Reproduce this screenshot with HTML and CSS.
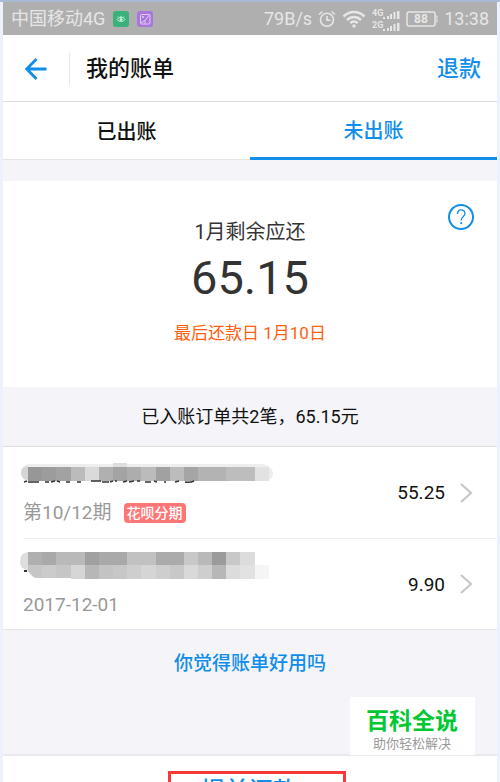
FILE: index.html
```html
<!DOCTYPE html>
<html lang="zh-CN">
<head>
<meta charset="utf-8">
<meta name="viewport" content="width=device-width, initial-scale=1">
<title>我的账单</title>
<link rel="stylesheet" href="styles.css">
</head>
<body>
<div class="screen">
  <div class="status">
    <div class="status-group">
      <span>中国移动4G</span>
      <svg class="app-icon" width="16" height="16" viewBox="0 0 16 16" aria-hidden="true">
        <rect width="16" height="16" rx="3" fill="#38b27a"/>
        <path d="M4 8.500C5.500 5.500 10.500 5.500 12 8.500C10.500 11 5.500 11 4 8.500ZM5 5.500l1 1.200M8 4.800v1.500M11 5.500l-1 1.200" fill="none" stroke="#c9eedb" stroke-width="1"/>
        <circle cx="8" cy="8.500" r="1.500" fill="#c9eedb"/>
      </svg>
      <svg class="app-icon" width="16" height="16" viewBox="0 0 16 16" aria-hidden="true">
        <rect width="16" height="16" rx="3" fill="#a977dc"/>
        <rect x="3.500" y="3.500" width="9.500" height="9.500" rx="1" fill="none" stroke="#e0cbf5"/>
        <path d="M4 12L8 9.500L12.500 4M8 12.500V9.500" fill="none" stroke="#e0cbf5"/>
        <circle cx="6" cy="6" r="1" fill="#e0cbf5"/>
      </svg>
    </div>
    <div class="status-group status-right">
      <span>79B/s</span>
      <svg width="18" height="18" viewBox="0 0 18 18" fill="none" stroke="#e6e6e6" stroke-width="1.600" aria-hidden="true">
        <circle cx="9" cy="9.800" r="6.500"/><path d="M9 6v4.300h3.500M1 4.500L4.500 1.500M17 4.500L13.500 1.500"/>
      </svg>
      <svg class="wifi" width="24" height="18" viewBox="0 0 24 18" fill="none" stroke="#e6e6e6" stroke-width="2.500" aria-hidden="true">
        <path d="M1.500 6.500C7.500 0.500 16.500 0.500 22.500 6.500M5 10C9 6 15 6 19 10M8.300 13.200C10.500 11 13.500 11 15.700 13.200"/><circle cx="12" cy="16" r="1.700" fill="#e6e6e6" stroke="none"/>
      </svg>
      <svg width="28" height="24" viewBox="0 0 28 24" fill="#e6e6e6" aria-hidden="true">
        <text class="network" x="0" y="9">4G</text><text class="network" x="0" y="21">2G</text>
        <path d="M11 10h2v2h-2zM15 9h2v3h-2zM18 7h2v5h-2zM21.500 5h2v7h-2zM25 4h2.500v8h-2.500zM11 22h2v2h-2zM15 21h2v3h-2zM18 19h2v5h-2zM21.500 17h2v7h-2zM25 16h2.500v8h-2.500z"/>
      </svg>
      <svg class="battery" width="32" height="18" viewBox="0 0 32 18" aria-hidden="true">
        <rect x="1" y="2" width="28" height="14" rx="2" fill="none" stroke="#e6e6e6" stroke-width="1.500"/>
        <path d="M30 6h1v6h-1" fill="none" stroke="#e6e6e6"/>
        <text class="charge" x="15" y="13" text-anchor="middle">88</text>
      </svg>
      <span>13:38</span>
    </div>
  </div>

  <header class="header">
    <button class="back" aria-label="返回">
      <svg width="22" height="22" viewBox="0 0 22 22" fill="none" stroke="#108ee9" stroke-width="2.800" aria-hidden="true"><path d="M11.500 1L1.800 11l9.700 10M2 11h19.500"/></svg>
    </button>
    <h1 class="title">我的账单</h1>
    <a class="refund" href="#refund">退款</a>
  </header>

  <nav class="tabs">
    <button class="tab">已出账</button>
    <button class="tab tab-active">未出账</button>
  </nav>

  <section class="balance">
    <button class="help" aria-label="帮助">
      <svg width="28" height="28" viewBox="0 0 28 28" fill="none" stroke="#108ee9" aria-hidden="true"><circle cx="14" cy="14" r="12" stroke-width="2"/><path d="M10.500 11C10.500 5.500 18 5.500 18 10.500C18 13.500 14.200 13.500 14.200 17.500" stroke-width="1.300"/><circle cx="14.200" cy="20.200" r="1.100" fill="#108ee9" stroke="none"/></svg>
    </button>
    <p class="balance-label">1月剩余应还</p>
    <p class="amount">65.15</p>
    <p class="due">最后还款日 1月10日</p>
  </section>

  <p class="summary">已入账订单共2笔，65.15元</p>

  <ul class="orders">
    <li><a class="order" href="#order-1">
      <div class="order-info">
        <svg class="mask" width="254" height="28" viewBox="0 0 254 28" aria-hidden="true">
          <path d="M9 5H242Q254 7 253 16Q252 22 242 22H9Q1 22 1 13Q1 6 9 5" fill="#eeeeee"/>
          <path d="M8 7Q1 8 1 14Q2 21 8 21Z" fill="#d5d5d5"/>
          <path d="M93 4h14v4H93z" fill="#dedede"/>
          <g shape-rendering="crispEdges">
            <path d="M8 8h14v14H8z" fill="#979797"/><path d="M22 8h14v14H22z" fill="#9c9c9c"/><path d="M36 8h15v14H36z" fill="#a2a2a2"/><path d="M51 8h14v14H51z" fill="#bbb"/><path d="M65 8h14v14H65z" fill="#dadada"/><path d="M79 8h14v14H79z" fill="#b0b0b0"/><path d="M93 8h14v14H93z" fill="#a3a3a3"/><path d="M107 8h14v14h-14z" fill="#adadad"/><path d="M121 8h15v14h-15z" fill="#bbb"/><path d="M136 8h14v14h-14z" fill="#a1a1a1"/><path d="M150 8h14v14h-14z" fill="#bcbcbc"/><path d="M164 8h14v14h-14z" fill="#a5a5a5"/><path d="M178 8h28v14h-28z" fill="#b3b3b3"/><path d="M206 8h29v14h-29z" fill="#bdbdbd"/><path d="M235 8h14v14h-14z" fill="#e2e2e2"/>
          </g>
          <path d="M4 23l3-1M8 23h11M25 23h4M31 23l4-1M37 22l3 1M46 23h4M57 23h4M71 22h10M82 23h7M90 23l3-1M95 22h2M103 23l4-1M109 23l5-1M117 22h3M125 23h6M134 22l3 1M145 22v2M155 23l4-1M165 23q5 1 9-1" fill="none" stroke="#333" stroke-width="1.500"/>
        </svg>
        <div class="meta"><span>第10/12期</span><span class="tag">花呗分期</span></div>
      </div>
      <span class="price">55.25</span>
      <svg class="chevron" width="14" height="22" viewBox="0 0 14 22" fill="none" stroke="#c7c7cc" stroke-width="2.200" aria-hidden="true"><path d="M2 2l10 9-10 9"/></svg>
    </a></li>
    <li><a class="order" href="#order-2">
      <div class="order-info">
        <svg class="mask" width="254" height="28" viewBox="0 0 254 28" aria-hidden="true">
          <path d="M8 1Q0 2 0 10Q0 17 5 18L13 26H47V14H8Z" fill="#dedede"/>
          <g shape-rendering="crispEdges">
            <path d="M8 1h14v13H8z" fill="#afafaf"/><path d="M22 1h14v13H22z" fill="#a9a9a9"/><path d="M36 1h29v13H36z" fill="#b9b9b9"/><path d="M65 1h14v13H65z" fill="#a0a0a0"/><path d="M79 1h28v13H79z" fill="#a9a9a9"/><path d="M107 1h29v13h-29z" fill="#c1c1c1"/><path d="M136 1h28v13h-28z" fill="#ababab"/><path d="M164 1h14v13h-14z" fill="#c8c8c8"/><path d="M178 1h14v13h-14z" fill="#b9b9b9"/><path d="M192 1h14v13h-14z" fill="#9b9b9b"/><path d="M206 1h14v13h-14z" fill="#c8c8c8"/><path d="M220 1h15v13h-15z" fill="#dcdcdc"/>
            <path d="M22 14h14v13H22z" fill="#cbcbcb"/><path d="M36 14h15v13H36z" fill="#c6c6c6"/><path d="M51 14h14v14H51z" fill="#d6d6d6"/><path d="M65 14h14v14H65z" fill="#b7b7b7"/><path d="M79 14h14v14H79z" fill="#c3c3c3"/><path d="M93 14h14v14H93z" fill="#c7c7c7"/><path d="M107 14h14v14h-14z" fill="#cecece"/><path d="M121 14h15v14h-15z" fill="#d5d5d5"/><path d="M136 14h14v14h-14z" fill="#cecece"/><path d="M150 14h14v14h-14z" fill="#c8c8c8"/><path d="M164 14h14v14h-14z" fill="#d9d9d9"/><path d="M178 14h14v14h-14z" fill="#cecece"/><path d="M192 14h14v14h-14z" fill="#b7b7b7"/><path d="M206 14h14v14h-14z" fill="#dcdcdc"/><path d="M220 14h15v14h-15z" fill="#e2e2e2"/><path d="M235 14h14v14h-14z" fill="#f5f5f5"/>
          </g>
          <path d="M8 14h14v13h-7L8 20Z" fill="#c6c6c6"/><path d="M4 20h3" stroke="#333" stroke-width="2"/>
        </svg>
        <div class="meta"><span>2017-12-01</span></div>
      </div>
      <span class="price">9.90</span>
      <svg class="chevron" width="14" height="22" viewBox="0 0 14 22" fill="none" stroke="#c7c7cc" stroke-width="2.200" aria-hidden="true"><path d="M2 2l10 9-10 9"/></svg>
    </a></li>
  </ul>

  <div class="feedback"><a href="#feedback">你觉得账单好用吗</a></div>

  <footer class="footer">
    <button class="repay">提前还款</button>
  </footer>
</div>
<aside class="badge"><strong>百科全说</strong><span>助你轻松解决</span></aside>
</body>
</html>
```
FILE: styles.css
```css
* {
  box-sizing: border-box;
}

body {
  margin: 0;
  height: 100vh;
  overflow: hidden;
  background: #ecf1fb;
  font-family: Roboto, "Noto Sans CJK SC", sans-serif;
  color: #111;
}

h1, p, ul {
  margin: 0;
  padding: 0;
}

ul {
  list-style: none;
}

a {
  color: inherit;
  text-decoration: none;
}

button {
  padding: 0;
  border: 0;
  background: none;
  color: inherit;
  font: inherit;
}

svg {
  display: block;
  flex: none;
}

.screen {
  min-height: 100vh;
  padding: 0 3px;
  border-top: 2px solid #a9bbd4;
  display: flex;
  flex-direction: column;
  background: linear-gradient(#f4f4f9, #f4f4f9) content-box;
}

.status {
  height: 33px;
  padding: 0 8px;
  display: flex;
  align-items: center;
  justify-content: space-between;
  background: #afafaf;
  color: #e6e6e6;
  font-size: 18px;
  line-height: 24px;
}

.status-group {
  display: flex;
  align-items: center;
  gap: 8px;
}

.status-right {
  gap: 6px;
}

.network {
  font-size: 9px;
  font-weight: 700;
}

.charge {
  font-size: 12px;
  font-weight: 700;
  fill: #e6e6e6;
}

.header {
  height: 67px;
  padding: 1px 16px 0 22px;
  display: flex;
  align-items: center;
  background: #fff;
  border-bottom: 1px solid #ddd;
}

.back {
  padding-right: 22px;
}

.title {
  flex: 1;
  padding-left: 16px;
  border-left: 1px solid #e5e5e5;
  font-size: 22px;
  font-weight: 500;
  line-height: 32px;
}

.refund {
  color: #108ee9;
  font-size: 22px;
  font-weight: 500;
  line-height: 32px;
}

.tabs {
  display: flex;
  height: 58px;
  background: #fff;
}

.tab {
  flex: 1;
  border-bottom: 1px solid #e5e5e5;
  font-size: 20px;
  font-weight: 500;
}

.tab-active {
  border-bottom: 3px solid #108ee9;
  color: #108ee9;
}

.balance {
  flex: none;
  position: relative;
  margin-top: 21px;
  padding: 36px 0 40px;
  background: #fff;
  color: #333;
  text-align: center;
}

.help {
  position: absolute;
  top: 22px;
  right: 22px;
}

.balance-label {
  font-size: 20px;
  line-height: 30px;
}

.amount {
  font-size: 47px;
  line-height: 62px;
}

.due {
  padding-top: 10px;
  color: #ff6010;
  font-size: 17px;
  line-height: 28px;
}

.summary {
  flex: none;
  padding: 14px 0;
  background: #f4f4f9;
  border-bottom: 1px solid #ddd;
  font-size: 18px;
  line-height: 31px;
  text-align: center;
}

.orders {
  flex: none;
  background: #fff;
  border-bottom: 1px solid #e5e5e5;
}

.order {
  height: 91px;
  margin-left: 20px;
  padding-right: 24px;
  display: flex;
  align-items: center;
}

li + li .order {
  border-top: 1px solid #eee;
}

.order-info {
  flex: 1;
  padding-top: 2px;
}

.mask {
  margin-left: -3px;
}

.meta {
  display: flex;
  align-items: center;
  gap: 12px;
  padding-top: 11px;
  color: #999;
  font-size: 19px;
  line-height: 30px;
}

.tag {
  padding: 0 3px;
  border-radius: 4px;
  background: #ff7676;
  color: #fff;
  font-size: 14px;
  font-weight: 500;
  line-height: 20px;
}

.price {
  font-size: 19px;
}

.chevron {
  margin-left: 14px;
}

.feedback {
  flex: 1;
  padding-top: 19px;
  color: #108ee9;
  font-size: 19px;
  font-weight: 500;
  line-height: 30px;
  text-align: center;
}

.footer {
  height: 28px;
  padding-top: 15px;
  background: #fff;
  border-top: 2px solid #e8e8ed;
  text-align: center;
}

.repay {
  padding: 0 46px 0 30px;
  margin-left: 14px;
  border: 3px solid #fb3838;
  color: #108ee9;
  font-size: 24px;
  font-weight: 500;
  line-height: 35px;
}

.badge {
  position: absolute;
  right: 25px;
  bottom: 27px;
  padding: 10px 17px 4px 16px;
  display: flex;
  flex-direction: column;
  align-items: center;
  background: #fff;
}

.badge strong {
  color: #00c832;
  font-size: 23px;
  line-height: 30px;
}

.badge span {
  color: #999;
  font-size: 13px;
  line-height: 14px;
}
```
